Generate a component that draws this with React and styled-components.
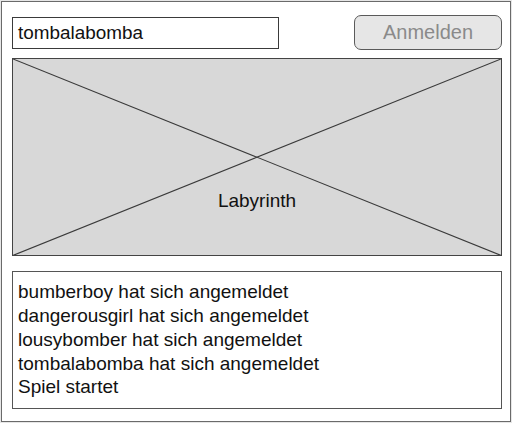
import React from "react";
import styled, { createGlobalStyle } from "styled-components";

const Global = createGlobalStyle`
  html, body { margin: 0; padding: 0; background: #ffffff; }
  body { font-family: "Liberation Sans", Arial, sans-serif; }
  * { box-sizing: border-box; }
`;

const Frame = styled.div`
  width: 512px;
  height: 423px;
  border: 2px solid #6a6a6a;
  outline: 1px solid #e6e6e6;
  outline-offset: -1px;
  padding: 13px 8px 12px 10px;
  display: flex;
  flex-direction: column;
  background: #ffffff;
`;

const TopRow = styled.div`
  display: flex;
  align-items: center;
  justify-content: space-between;
  height: 35px;
`;

const NameField = styled.div`
  width: 267px;
  height: 32px;
  border: 1.5px solid #3a3a3a;
  display: flex;
  align-items: center;
  padding-left: 5px;
  font-size: 18.9px;
  color: #111;
`;

const LoginButton = styled.button`
  width: 148px;
  height: 35px;
  border: 1.5px solid #5a5a5a;
  border-radius: 7px;
  background: #e6e6e6;
  color: #8a8a8a;
  font-family: "Liberation Sans", Arial, sans-serif;
  font-size: 20px;
  padding: 0;
  display: flex;
  align-items: center;
  justify-content: center;
`;

const Placeholder = styled.div`
  position: relative;
  margin-top: 8px;
  height: 199px;
  border: 1.5px solid #444;
  background: #d8d8d8;
  display: flex;
  flex-direction: column;
  align-items: center;
  justify-content: flex-end;
  padding-bottom: 43px;
`;

const Cross = styled.svg`
  position: absolute;
  inset: 0;
  width: 100%;
  height: 100%;
`;

const Label = styled.span`
  position: relative;
  font-size: 19px;
  color: #111;
`;

const Log = styled.div`
  margin-top: 15px;
  height: 138px;
  border: 1.5px solid #555;
  padding: 8px 0 0 5px;
  display: flex;
  flex-direction: column;
`;

const LogLine = styled.div`
  font-size: 19px;
  line-height: 23.75px;
  color: #111;
  white-space: nowrap;
`;

const lines = [
  "bumberboy hat sich angemeldet",
  "dangerousgirl hat sich angemeldet",
  "lousybomber hat sich angemeldet",
  "tombalabomba hat sich angemeldet",
  "Spiel startet",
];

export default function App() {
  return (
    <>
      <Global />
      <Frame>
        <TopRow>
          <NameField>tombalabomba</NameField>
          <LoginButton>Anmelden</LoginButton>
        </TopRow>
        <Placeholder>
          <Cross viewBox="0 0 100 100" preserveAspectRatio="none">
            <line x1="0" y1="0" x2="100" y2="100" stroke="#3a3a3a" strokeWidth="1.1" vectorEffect="non-scaling-stroke" />
            <line x1="100" y1="0" x2="0" y2="100" stroke="#3a3a3a" strokeWidth="1.1" vectorEffect="non-scaling-stroke" />
          </Cross>
          <Label>Labyrinth</Label>
        </Placeholder>
        <Log>
          {lines.map((l) => (
            <LogLine key={l}>{l}</LogLine>
          ))}
        </Log>
      </Frame>
    </>
  );
}
